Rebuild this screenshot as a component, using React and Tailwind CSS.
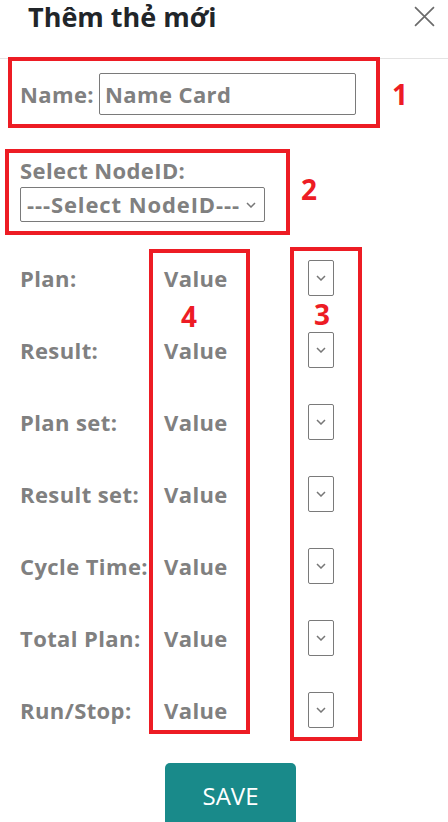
import React from 'react';

const FONT = { fontFamily: '"Open Sans", "Noto Sans", sans-serif' };

const ROWS = ['Plan:', 'Result:', 'Plan set:', 'Result set:', 'Cycle Time:', 'Total Plan:', 'Run/Stop:'];

function Chevron({ className = '' }) {
  return (
    <svg viewBox="0 0 10 6" className={className} fill="none" stroke="#777" strokeWidth="1.5">
      <path d="M1 1l4 4 4-4" />
    </svg>
  );
}

export default function App() {
  return (
    <div className="relative w-[448px] h-[822px] bg-white overflow-hidden" style={FONT}>
      {/* header */}
      <div className="h-[59px] border-b border-[#e3e3e3] flex items-start justify-between pl-[28px] pr-[13px]">
        <h1 className="text-[27px] leading-[34px] font-bold text-[#212529]">Thêm thẻ mới</h1>
        <svg viewBox="0 0 20 20" className="w-[21px] h-[21px] mt-[6px]" stroke="#6b6b6b" strokeWidth="1.6">
          <path d="M1 1l18 18M19 1L1 19" />
        </svg>
      </div>

      <div className="pl-[20px] text-[#808080] font-bold text-[22px] tracking-[0.4px]">
        {/* name */}
        <div className="flex items-center mt-[14px] h-[42px]">
          <span className="w-[79px]">Name:</span>
          <div className="w-[257px] h-[42px] border border-[#7a7a7a] rounded-[2px] flex items-center px-[5px]">
            Name Card
          </div>
        </div>

        {/* node id */}
        <div className="mt-[43px] leading-[24px]">Select NodeID:</div>
        <div className="mt-[5px] w-[245px] h-[35px] border border-[#7a7a7a] rounded-[2px] flex items-center justify-between pl-[6px] pr-[8px]">
          <span className="tracking-[0.9px]">---Select NodeID---</span>
          <Chevron className="w-[10px] h-[6px]" />
        </div>

        {/* rows */}
        <div className="mt-[20px]">
          {ROWS.map((r) => (
            <div key={r} className="h-[72px] grid grid-cols-[144px_144px_26px] items-center">
              <span className="whitespace-nowrap">{r}</span>
              <span>Value</span>
              <div className="h-[36px] border border-[#7a7a7a] rounded-[2px] flex items-center justify-center">
                <Chevron className="w-[10px] h-[6px]" />
              </div>
            </div>
          ))}
        </div>
      </div>

      <div className="flex justify-center mt-[17px] pl-[13px]">
        <button className="w-[131px] h-[67px] rounded-[5px] bg-[#198a8a] text-white text-[24px] pb-[2px]">SAVE</button>
      </div>

      {/* annotations */}
      <div className="absolute left-[8px] top-[57px] w-[372px] h-[71px] border-[4px] border-[#ed1c24]" />
      <div className="absolute left-[5px] top-[149px] w-[285px] h-[86px] border-[4px] border-[#ed1c24]" />
      <div className="absolute left-[149px] top-[249px] w-[101px] h-[485px] border-[4px] border-[#ed1c24]" />
      <div className="absolute left-[290px] top-[247px] w-[72px] h-[494px] border-[4px] border-[#ed1c24]" />
      <span className="absolute left-[392px] top-[77px] text-[28px] leading-[34px] font-bold text-[#ed1c24]">1</span>
      <span className="absolute left-[301px] top-[172px] text-[28px] leading-[34px] font-bold text-[#ed1c24]">2</span>
      <span className="absolute left-[314px] top-[297px] text-[28px] leading-[34px] font-bold text-[#ed1c24]">3</span>
      <span className="absolute left-[181px] top-[299px] text-[28px] leading-[34px] font-bold text-[#ed1c24]">4</span>
    </div>
  );
}
